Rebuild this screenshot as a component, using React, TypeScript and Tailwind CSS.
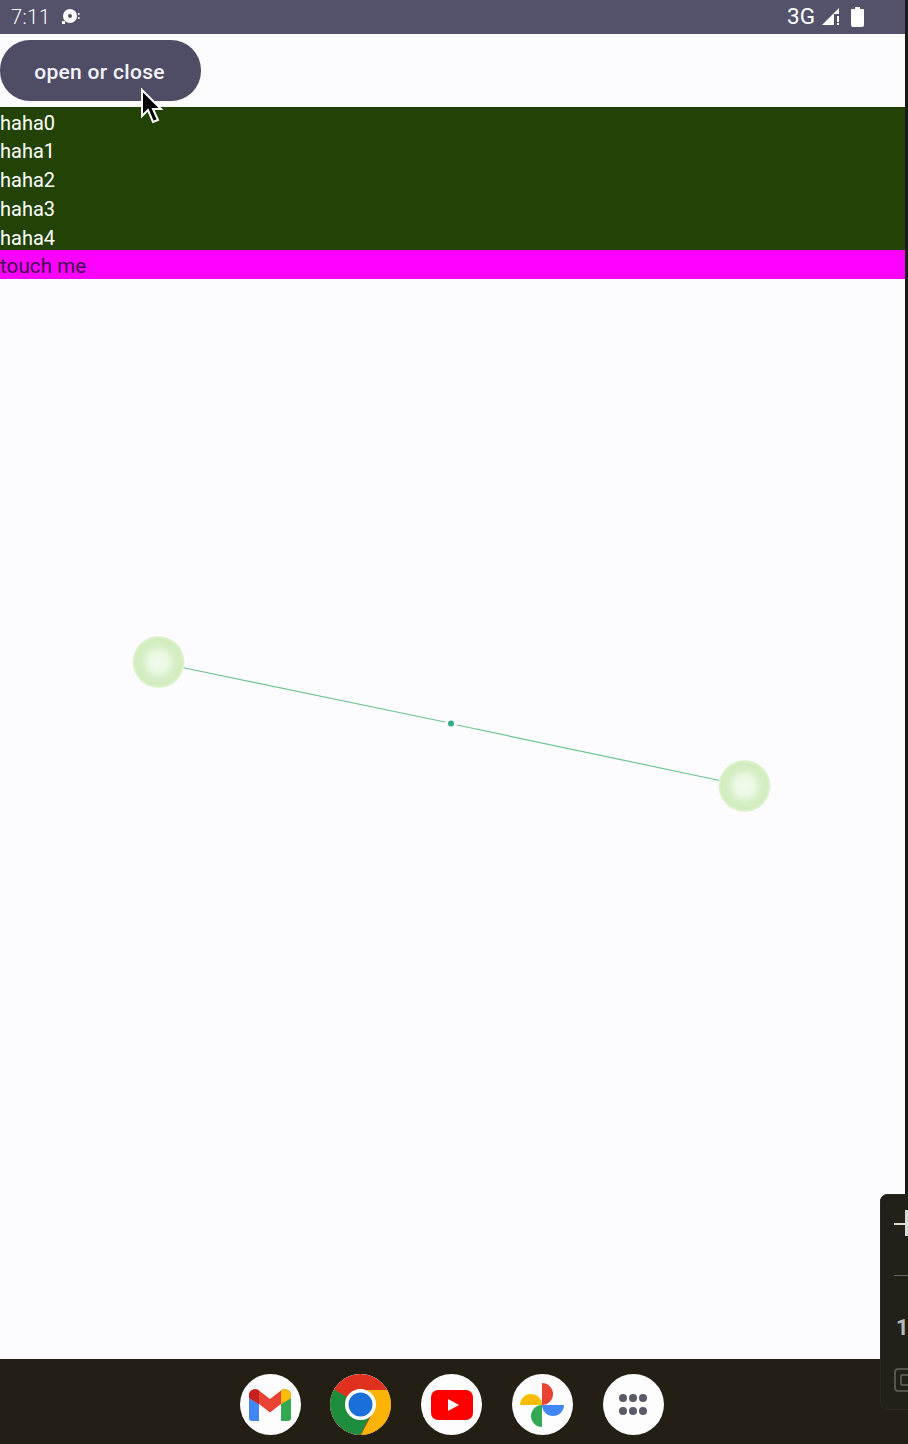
const rows = ["haha0", "haha1", "haha2", "haha3", "haha4"];

function Handle({ id, cx, cy }: { id: string; cx: number; cy: number }) {
  return (
    <g>
      <radialGradient id={id}>
        <stop offset="0%" stopColor="#f2fbee" />
        <stop offset="35%" stopColor="#ebf8e3" />
        <stop offset="65%" stopColor="#d6eec6" />
        <stop offset="88%" stopColor="#d2ecbe" />
        <stop offset="100%" stopColor="#e2f4d4" />
      </radialGradient>
      <circle cx={cx} cy={cy} r={26} fill={`url(#${id})`} />
    </g>
  );
}

function Gmail() {
  return (
    <svg width="42" height="32" viewBox="0 0 42 32" fill="none">
      <path d="M0 9v20a3 3 0 0 0 3 3h7V15z" fill="#4285f4" />
      <path d="M32 15v17h7a3 3 0 0 0 3-3V9z" fill="#34a853" />
      <path d="M0 6c0-5 6-7.500 10-4.500L21 10 32 1.500C36-1.500 42 1 42 6v3l-10 6-11 8.500L10 15 0 9z" fill="#ea4335" />
      <path d="M0 6c0-5 6-7.500 10-4.500V15L0 9z" fill="#c5221f" />
      <path d="M42 6c0-5-6-7.500-10-4.500V15l10-6z" fill="#fbbc04" />
    </svg>
  );
}

function Chrome() {
  return (
    <svg width="61" height="61" viewBox="0 0 61 61">
      <circle cx="30.500" cy="30.500" r="30.500" fill="#e0301e" />
      <path d="M30.500 30.500 L4 15.500 A30.500 30.500 0 0 0 30.500 61 L46 30.500z" fill="#1e8e3e" />
      <path d="M30.500 16 H57.500 A30.500 30.500 0 0 1 31 61 L43 38z" fill="#fbb305" />
      <circle cx="30.500" cy="30.500" r="15.500" fill="#ffffff" />
      <circle cx="30.500" cy="30.500" r="12" fill="#1a6fd8" />
    </svg>
  );
}

function Youtube() {
  return (
    <svg width="42" height="30" viewBox="0 0 42 30">
      <rect width="42" height="30" rx="7" fill="#ff0000" />
      <path d="M17 9l11 6-11 6z" fill="#ffffff" />
    </svg>
  );
}

function Photos() {
  return (
    <svg width="44" height="44" viewBox="0 0 44 44">
      <path d="M22 22V0a11 11 0 0 1 0 22z" fill="#ea4335" />
      <path d="M22 22H0a11 11 0 0 1 22 0z" fill="#fbbc04" />
      <path d="M22 22v22a11 11 0 0 1 0-22z" fill="#34a853" />
      <path d="M22 22h22a11 11 0 0 1-22 0z" fill="#4285f4" />
    </svg>
  );
}

function AppsGrid() {
  return (
    <div className="grid grid-cols-3 gap-x-[2px] gap-y-[5px]">
      {[0, 1, 2, 3, 4, 5].map((i) => (
        <div key={i} className="w-[8px] h-[8px] rounded-full bg-[#5a5a68]" />
      ))}
    </div>
  );
}

function DockIcon({ children }: { children: React.ReactNode }) {
  return (
    <div className="w-[61px] h-[61px] rounded-full bg-[#fdfdfd] flex items-center justify-center overflow-hidden">
      {children}
    </div>
  );
}

export default function App() {
  return (
    <div className="relative w-[908px] h-[1444px] overflow-hidden bg-[#fcfcff] font-['Roboto',sans-serif]">
      <div className="flex h-[1359px]">
        <div className="w-[905px] flex flex-col">
          {/* status bar */}
          <div className="h-[34px] bg-[#54526a] flex items-center justify-between text-white text-[20px] pl-[11px] pr-[41px]">
            <div className="flex items-center gap-[11px]">
              <span className="font-light tracking-[0.5px]">7:11</span>
              <svg width="20" height="16" viewBox="0 0 20 16" fill="#fff">
                <circle cx="9" cy="7" r="7" />
                <circle cx="9" cy="7" r="2" fill="#54526a" />
                <rect x="1" y="12" width="3" height="3" />
                <rect x="17" y="4" width="1.500" height="2" />
                <rect x="17" y="8" width="1.500" height="2" />
              </svg>
            </div>
            <div className="flex items-center">
              <span className="mr-[7px] text-[22.500px]">3G</span>
              <svg width="18" height="20" viewBox="0 0 18 20" fill="#fff" className="mr-[11px]">
                <path d="M0 18 L17 1 V7 H12 V18z" />
                <rect x="15" y="9" width="2" height="6" />
                <rect x="15" y="16" width="2" height="2" />
              </svg>
              <svg width="13" height="20" viewBox="0 0 13 20" fill="#fff">
                <path d="M4 0h5v2h3a1 1 0 0 1 1 1v15a2 2 0 0 1-2 2H2a2 2 0 0 1-2-2V3a1 1 0 0 1 1-1h3z" />
              </svg>
            </div>
          </div>

          <div className="h-[73px] pt-[6px]">
            <button className="w-[201px] h-[61px] pt-[4px] pr-[2px] rounded-[30px] bg-[#4f4d66] text-[#f4f4f8] text-[21px] tracking-[0.3px] font-medium">
              open or close
            </button>
          </div>

          <div className="h-[143px] pt-[1.500px] bg-[#234206] text-white text-[20px] leading-[28.800px]">
            {rows.map((r) => (
              <div key={r}>{r}</div>
            ))}
          </div>
          <div className="h-[29px] bg-[#ff00ff] text-[#3c0b4a] text-[20.500px] tracking-[0.1px] leading-[32px]">touch me</div>
        </div>
        <div className="w-[3px] bg-[#1a1a1a]" />
      </div>

      {/* dock */}
      <div className="h-[85px] bg-[#231f14] pl-[239.500px] pt-[15px] flex gap-[29.750px]">
        <DockIcon><Gmail /></DockIcon>
        <DockIcon><Chrome /></DockIcon>
        <DockIcon><Youtube /></DockIcon>
        <DockIcon><Photos /></DockIcon>
        <DockIcon><AppsGrid /></DockIcon>
      </div>

      {/* drag handles and the line between them */}
      <svg className="absolute left-0 top-0 pointer-events-none" width="908" height="1444">
        <line x1="180" y1="667" x2="445" y2="722" stroke="#6ec48f" strokeWidth="1.200" />
        <line x1="457" y1="725" x2="722" y2="781" stroke="#6ec48f" strokeWidth="1.200" />
        <circle cx="451" cy="723.500" r="3" fill="#36a98f" />
        <Handle id="handle-a" cx={158.500} cy={662} />
        <Handle id="handle-b" cx={744.500} cy={786} />
      </svg>

      {/* mouse cursor */}
      <svg className="absolute left-[140px] top-[88px]" width="24" height="38" viewBox="0 0 24 38">
        <path d="M2 2 V28 L8 22 L13 34 L18 32 L13 21 L21 21z" fill="#000" stroke="#fff" strokeWidth="2" />
      </svg>

      {/* taskbar panel cut off at the right edge */}
      <div className="absolute left-[880px] top-[1194px] w-[40px] h-[216px] rounded-[7px] bg-[#222018] border border-[#2c2a20] text-[#b8b8b8]">
        <div className="absolute left-[13px] top-[28px] w-[20px] h-[2px] bg-[#d8d8d8]" />
        <div className="absolute left-[24px] top-[15px] w-[3px] h-[26px] bg-[#d8d8d8]" />
        <div className="absolute left-[13px] top-[80px] w-[20px] h-[1px] bg-[#666]" />
        <div className="absolute left-[15px] top-[121px] text-[22px] leading-[24px] font-bold">1:</div>
        <div className="absolute left-[13px] top-[173px] w-[24px] h-[24px] rounded-[4px] border-2 border-[#55534a]" />
        <div className="absolute left-[19px] top-[179px] w-[16px] h-[12px] rounded-[2px] border-2 border-[#55534a]" />
      </div>
    </div>
  );
}
